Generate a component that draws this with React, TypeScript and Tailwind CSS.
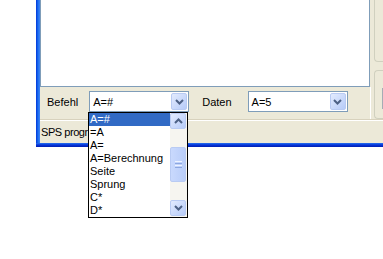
import React from "react";

const ITEMS = ["A=#", "=A", "A=", "A=Berechnung", "Seite", "Sprung", "C*", "D*"];

function Chevron({ up = false }: { up?: boolean }) {
  return (
    <svg width="9" height="6" viewBox="0 0 9 6" className="block">
      <path
        d={up ? "M1 5 L4.5 1.5 L8 5" : "M1 1 L4.5 4.5 L8 1"}
        fill="none"
        stroke="#4d6185"
        strokeWidth="2"
      />
    </svg>
  );
}

// XP style little blue button used by combos and scrollbars
function XpButton({ up = false, className = "" }: { up?: boolean; className?: string }) {
  return (
    <div
      className={
        "flex items-center justify-center rounded-[2px] border border-[#b9cbf3] bg-gradient-to-br from-[#e3ebfe] to-[#b6cbf8] " +
        className
      }
    >
      <Chevron up={up} />
    </div>
  );
}

function Combo({ value }: { value: string }) {
  return (
    <div className="flex h-[21px] w-[100px] border border-[#7f9db9] bg-white p-px">
      <div className="flex-1 pl-[2px] leading-[19px]">{value}</div>
      <XpButton className="h-[17px] w-[16px]" />
    </div>
  );
}

export default function App() {
  return (
    <div className="relative min-h-screen bg-white text-[11px] text-black font-['Liberation_Sans',Arial,sans-serif]">
      <div className="ml-[36px] flex w-[347px]">
        <div className="w-[4px] bg-gradient-to-r from-[#0831d9] via-[#1a6cf0] to-[#3d84f5]" />
        <div className="flex-1 bg-[#ece9d8]">
          <div className="flex">
            <div className="w-[330px]">
              <div className="h-[87px] border-b border-l border-r border-[#7f9db9] bg-white" />
              <div className="flex h-[32px] items-start pt-[4px]">
                <span className="ml-[7px] mr-[11px] mt-[3px]">Befehl</span>
                <Combo value="A=#" />
                <span className="ml-[13px] mr-[16px] mt-[3px]">Daten</span>
                <Combo value="A=5" />
              </div>
            </div>
            <div className="flex w-[13px] flex-col">
              <div className="flex h-[87px] flex-col pl-[4px]">
                <div className="h-[62px] rounded-bl-[4px] border-b border-l border-[#d0d0bf]" />
                <div className="mt-[8px] flex-1 rounded-tl-[4px] border-l border-t border-[#d0d0bf]" />
              </div>
              <div className="flex h-[32px]">
                <div className="w-px bg-white" />
                <div className="ml-[3px] flex-1 rounded-bl-[4px] border-b border-l border-[#d0d0bf] pl-[7px] pt-px">
                  <div className="h-[21px] border-l border-t border-[#a5acb5]" />
                </div>
              </div>
            </div>
          </div>
          <div className="h-px bg-[#d8d2bd]" />
          <div className="h-px bg-white" />
          <div className="flex h-[22px] items-center pl-[1px]">
            {/* the open dropdown list covers the rest of the status text */}
            <span className="whitespace-nowrap tracking-[-0.45px]">SPS progr</span>
          </div>
        </div>
      </div>
      <div className="ml-[36px] h-[4px] w-[347px] bg-gradient-to-b from-[#2a70ee] via-[#0831d9] to-[#0020b0]" />

      <div className="absolute left-[88px] top-[112px] flex h-[106px] w-[100px] border border-black bg-white">
        <div className="flex-1">
          {ITEMS.map((t, i) => (
            <div
              key={t}
              className={
                "h-[13px] pl-px leading-[13px] " + (i === 0 ? "bg-[#316ac5] text-white" : "")
              }
            >
              {t}
            </div>
          ))}
        </div>
        <div className="flex w-[17px] flex-col bg-[#f6f5f0] pb-px">
          <XpButton up className="h-[16px] w-[16px]" />
          <div className="flex-1 pt-[18px]">
            <div className="flex h-[35px] w-[16px] flex-col items-center justify-center gap-[1px] rounded-[2px] border border-[#b9cbf3] bg-gradient-to-r from-[#c9d9fd] to-[#b9cdf9]">
              <div className="h-px w-[7px] bg-[#eef3fe]" />
              <div className="h-px w-[7px] bg-[#8da7e0]" />
              <div className="h-px w-[7px] bg-[#eef3fe]" />
              <div className="h-px w-[7px] bg-[#8da7e0]" />
            </div>
          </div>
          <XpButton className="h-[16px] w-[16px]" />
        </div>
      </div>
    </div>
  );
}
